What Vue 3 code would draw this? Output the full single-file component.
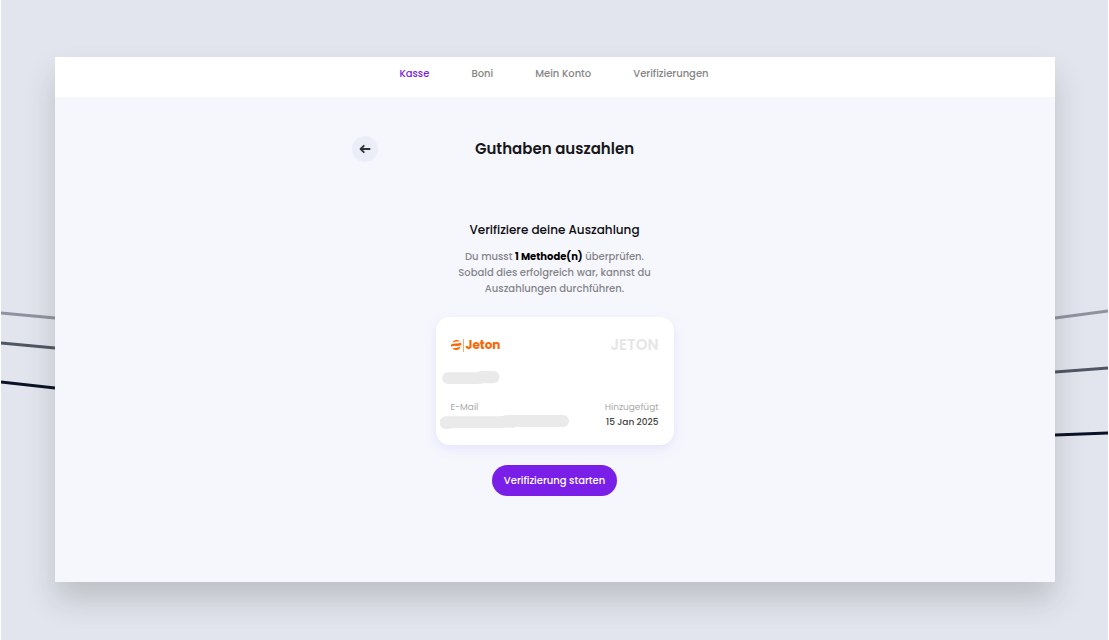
<template>
  <div class="page">
    <svg class="waves" viewBox="0 0 1107 640" preserveAspectRatio="none" aria-hidden="true">
      <g fill="none" stroke-width="3">
        <path d="M0 313 54 318M1054 318 1107 311" stroke="#8f939f" />
        <path d="M0 343 54 348M1054 372 1107 368" stroke="#505664" />
        <path d="M0 382 54 388M1054 435 1107 433" stroke="#0b1228" />
      </g>
    </svg>

    <div class="panel">
      <nav class="tabs">
        <a
          v-for="tab in tabs"
          :key="tab"
          href="#"
          :class="{ active: tab === activeTab }"
          @click.prevent="activeTab = tab"
        >{{ tab }}</a>
      </nav>

      <main class="content">
        <header class="title-row">
          <button class="back" type="button" aria-label="Zurück">
            <svg viewBox="0 0 12 12" width="12" height="12">
              <path d="M10.600 6H1.800M4.800 2.800 1.600 6l3.200 3.200" fill="none" stroke="#303138" stroke-width="1.8" stroke-linecap="round" stroke-linejoin="round" />
            </svg>
          </button>
          <h1>Guthaben auszahlen</h1>
        </header>

        <section class="verify">
          <h2>Verifiziere deine Auszahlung</h2>
          <p>
            Du musst <strong>1 Methode(n)</strong> überprüfen.<br />
            Sobald dies erfolgreich war, kannst du<br />
            Auszahlungen durchführen.
          </p>

          <div class="card">
            <div class="card-row">
              <div class="logo">
                <svg viewBox="0 0 13 14" width="13" height="14" aria-hidden="true">
                  <g fill="#ff6400">
                    <path d="M1.400 4.500A5 5 0 0 1 9 3.300Q5 3.400 1.400 4.500Z" />
                    <path d="M0 8.700V6.500Q3 5.200 5.500 5.500 8 5.700 10 4.500L10.300 7Q7.500 8.300 5 7.900 2.500 7.500 0 8.700Z" />
                    <path d="M1.200 10.300Q5.500 10.500 9.800 8.600A5 5 0 0 1 1.200 10.300Z" />
                  </g>
                  <path d="M12.500 1v13" stroke="#ffa66b" stroke-width="1" />
                </svg>
                <span>Jeton</span>
              </div>
              <span class="method">JETON</span>
            </div>

            <svg class="masked-name" viewBox="0 0 58 13" width="58" height="13" aria-hidden="true">
              <path d="M6 1.200H34L38 0H51.500A6 6 0 0 1 51.500 12.200H42Q38 13 34 13H6A5.900 5.900 0 0 1 6 1.200Z" fill="#eaeaea" />
            </svg>

            <div class="card-row details">
              <div>
                <span class="label">E-Mail</span>
                <svg class="masked-mail" viewBox="0 0 129 14" width="129" height="14" aria-hidden="true">
                  <path d="M6 1.200H61Q66 0 71 0H123A6 6 0 0 1 123 12H75L73.500 13.200 71 12.500 62 13H13Q9 14 6 14A6.400 6.400 0 0 1 6 1.200Z" fill="#eaeaea" />
                </svg>
              </div>
              <div class="added">
                <span class="label">Hinzugefügt</span>
                <span class="date">15 Jan 2025</span>
              </div>
            </div>
          </div>

          <button class="start" type="button">Verifizierung starten</button>
        </section>
      </main>
    </div>
  </div>
</template>

<script setup>
import { ref } from "vue";

const tabs = ["Kasse", "Boni", "Mein Konto", "Verifizierungen"];
const activeTab = ref("Kasse");
</script>

<style>
body {
  margin: 0;
}
</style>

<style scoped>
.page {
  position: relative;
  box-sizing: border-box;
  display: flex;
  min-height: 100vh;
  padding: 57px 53px 58px 54px;
  border: solid #fff;
  border-width: 0 1px;
  background: #e2e5ee;
  font-family: Poppins, Inter, "Open Sans", sans-serif;
  font-weight: 500;
  color: #0c0c0f;
}

.waves {
  position: absolute;
  inset: 0;
  width: 100%;
  height: 100%;
}

.panel {
  position: relative;
  flex: 1;
  background: #f6f7fd;
  box-shadow: 0 18px 28px rgba(50, 50, 40, 0.2);
}

.tabs {
  box-sizing: border-box;
  display: flex;
  justify-content: center;
  gap: 42px;
  height: 40px;
  padding: 9px 2px 0 0;
  background: #fff;
  font-size: 10px;
  line-height: 16px;
}

.tabs a {
  color: #858585;
  text-decoration: none;
}

.tabs a.active {
  color: #7a1fe8;
}

.content {
  display: flex;
  flex-direction: column;
  align-items: center;
  padding: 39px 17px 39px 16px;
}

.title-row {
  display: grid;
  grid-template-columns: 1fr auto 1fr;
  align-items: center;
  width: 100%;
  max-width: 405px;
}

.back {
  display: flex;
  align-items: center;
  justify-content: center;
  width: 26px;
  height: 26px;
  padding: 0;
  border: 0;
  border-radius: 50%;
  background: #ebedf8;
}

h1 {
  margin: 0;
  font-size: 15px;
  line-height: 24px;
  font-weight: 600;
  color: #18181b;
}

.verify {
  display: flex;
  flex-direction: column;
  align-items: center;
  width: 100%;
  margin-top: 58px;
}

h2 {
  margin: 0;
  font-size: 12px;
  line-height: 20px;
  font-weight: 500;
}

.verify p {
  margin: 9px 0 0;
  font-size: 10px;
  line-height: 16px;
  text-align: center;
  color: #858589;
}

.verify strong {
  font-weight: 700;
  color: #000;
}

.card {
  box-sizing: border-box;
  width: 100%;
  max-width: 238px;
  margin-top: 20px;
  padding: 18px 15px 15px;
  border-radius: 14px;
  background: #fff;
  box-shadow: 0 4px 12px rgba(110, 90, 255, 0.12);
}

.card-row {
  display: flex;
  justify-content: space-between;
}

.logo {
  display: flex;
  align-items: center;
  gap: 2px;
  font-size: 12px;
  line-height: 20px;
  font-weight: 700;
  color: #ff6400;
}

.method {
  font-size: 15px;
  line-height: 20px;
  font-weight: 600;
  color: #e6e6e6;
}

.masked-name {
  display: block;
  margin: 16px 0 0 -9px;
}

.masked-mail {
  display: block;
  margin: 0 0 0 -11px;
}

.details {
  margin-top: 16px;
}

.label,
.date {
  display: block;
  font-size: 9px;
  line-height: 15px;
}

.label {
  font-weight: 400;
  color: #aaa;
}

.added {
  text-align: right;
}

.date {
  color: #444;
}

.start {
  height: 31px;
  margin-top: 20px;
  padding: 0 12px;
  border: 0;
  border-radius: 16px;
  background: #7a1fe8;
  color: #fff;
  font-family: inherit;
  font-size: 10px;
  font-weight: 500;
}

button {
  cursor: pointer;
}
</style>
